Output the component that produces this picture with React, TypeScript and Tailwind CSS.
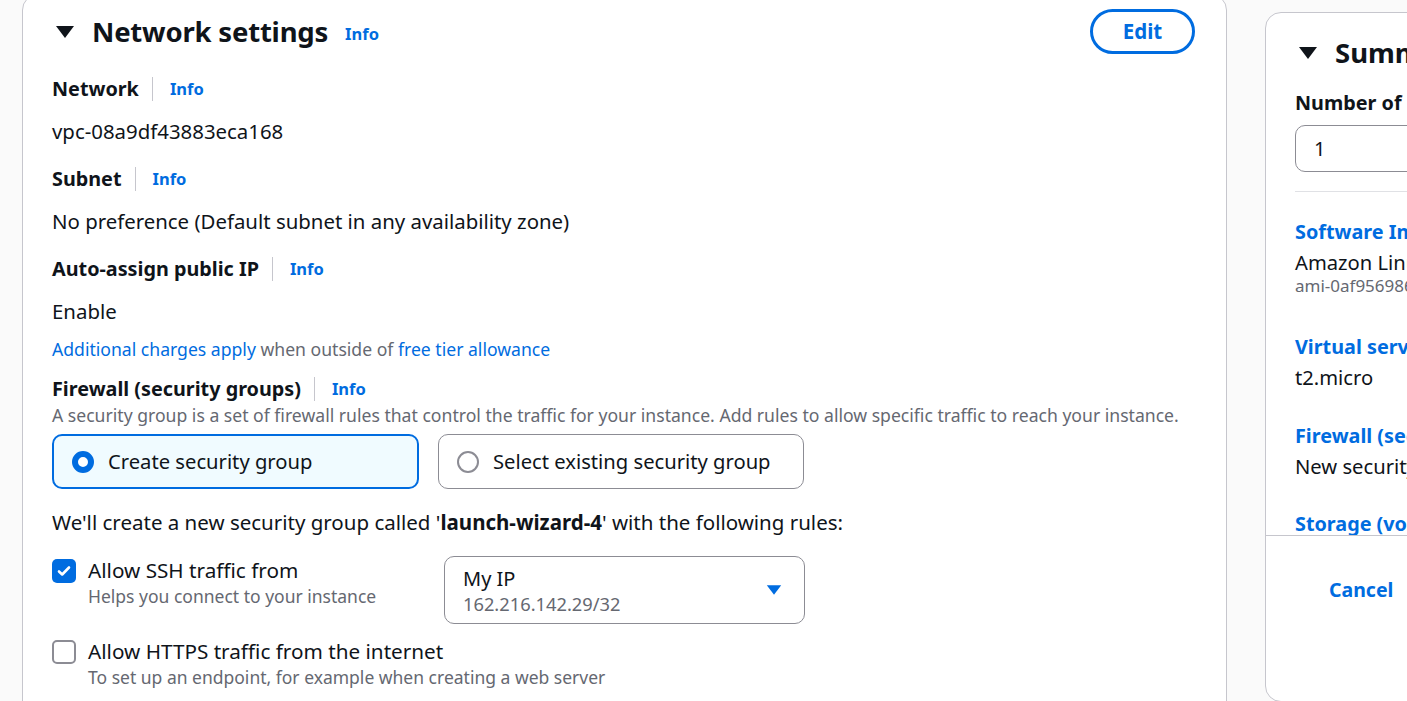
import React from 'react';

const font = { fontFamily: '"Noto Sans", "Open Sans", Arial, sans-serif' };

function Caret({ className }: { className?: string }) {
  return (
    <svg viewBox="0 0 20 14" className={className}>
      <path d="M1 1h18L10 13z" fill="currentColor" />
    </svg>
  );
}

function Label({ text }: { text: string }) {
  return (
    <div className="flex items-center h-[24px]">
      <span className="text-[19.8px] font-bold leading-[24px] text-[#0f141a]">{text}</span>
      <span className="ml-[13px] mr-[17px] h-[24px] w-px bg-[#c6c6cd]" />
      <span className="text-[16.5px] font-bold text-[#006ce0]">Info</span>
    </div>
  );
}

function Field({ label, value, className }: { label: string; value: string; className?: string }) {
  return (
    <div className={className}>
      <Label text={label} />
      <div className="mt-[17px] text-[20.4px] leading-[26px] text-[#0f141a]">{value}</div>
    </div>
  );
}

function Checkbox({ checked }: { checked?: boolean }) {
  if (checked) {
    return (
      <div className="w-[24px] h-[24px] rounded-[5px] bg-[#006ce0] flex items-center justify-center shrink-0">
        <svg viewBox="0 0 16 16" className="w-[16px] h-[16px]">
          <path d="M3 8.5l3.2 3L13 4.5" fill="none" stroke="white" strokeWidth="2.6" strokeLinecap="round" strokeLinejoin="round" />
        </svg>
      </div>
    );
  }
  return <div className="w-[24px] h-[24px] rounded-[5px] border-2 border-[#8c8c94] bg-white shrink-0" />;
}

export default function App() {
  return (
    <div className="w-[1407px] h-[701px] overflow-hidden bg-[#fafafa] text-[#0f141a]" style={font}>
      <div className="flex items-start">
        {/* Network settings card */}
        <div className="ml-[22px] mt-[-6px] w-[1205px] h-[740px] shrink-0 bg-white border border-[#c6c6cd] rounded-[16px] pl-[29px] pr-[30px] pt-[14px]">
          <div className="flex items-center justify-between h-[45px]">
            <div className="flex items-center">
              <Caret className="w-[20px] h-[14px] ml-[3px] text-[#0f141a]" />
              <h2 className="ml-[17px] text-[27.5px] font-bold leading-[36px] tracking-[-0.2px]">Network settings</h2>
              <span className="ml-[17px] mt-[6px] text-[16.5px] font-bold text-[#006ce0]">Info</span>
            </div>
            <button className="w-[105px] h-[45px] mr-[1px] rounded-full border-[3px] border-[#006ce0] text-[#006ce0] text-[20.5px] font-bold">
              Edit
            </button>
          </div>

          <Field className="mt-[23px]" label="Network" value="vpc-08a9df43883eca168" />
          <Field className="mt-[23px]" label="Subnet" value="No preference (Default subnet in any availability zone)" />
          <Field className="mt-[23px]" label="Auto-assign public IP" value="Enable" />

          <div className="mt-[14px] text-[17.6px] leading-[22px] text-[#656871]">
            <span className="text-[#006ce0]">Additional charges apply</span> when outside of{' '}
            <span className="text-[#006ce0]">free tier allowance</span>
          </div>

          <div className="mt-[17px]">
            <Label text="Firewall (security groups)" />
            <div className="mt-[3px] text-[17.6px] leading-[22px] text-[#656871] whitespace-nowrap">
              A security group is a set of firewall rules that control the traffic for your instance. Add rules to allow specific traffic to reach your instance.
            </div>
          </div>

          <div className="mt-[8px] flex gap-[19px]">
            <div className="w-[367px] h-[55px] rounded-[10px] border-2 border-[#006ce0] bg-[#f0fbff] flex items-center pl-[18px]">
              <div className="w-[22px] h-[22px] rounded-full border-[6px] border-[#006ce0] bg-white" />
              <span className="ml-[14px] text-[20.2px]">Create security group</span>
            </div>
            <div className="w-[366px] h-[55px] rounded-[10px] border border-[#8c8c94] flex items-center pl-[18px]">
              <div className="w-[22px] h-[22px] rounded-full border-2 border-[#8c8c94] bg-white" />
              <span className="ml-[14px] text-[20.2px]">Select existing security group</span>
            </div>
          </div>

          <div className="mt-[20px] text-[20.5px] leading-[26px] whitespace-nowrap">
            We'll create a new security group called '<span className="font-bold">launch-wizard-4</span>' with the following rules:
          </div>

          <div className="mt-[21px] flex items-start">
            <div className="w-[392px] flex items-start pt-[3px]">
              <Checkbox checked />
              <div className="ml-[12px] -mt-[2px]">
                <div className="text-[20.7px] leading-[26px]">Allow SSH traffic from</div>
                <div className="mt-[2px] text-[17.5px] leading-[22px] text-[#656871]">Helps you connect to your instance</div>
              </div>
            </div>
            <div className="w-[361px] h-[68px] rounded-[10px] border border-[#8c8c94] flex items-center justify-between pl-[18px] pr-[22px]">
              <div className="pt-[1px]">
                <div className="text-[20px] leading-[26px]">My IP</div>
                <div className="text-[18.3px] leading-[24px] text-[#656871]">162.216.142.29/32</div>
              </div>
              <Caret className="w-[16px] h-[12px] text-[#006ce0]" />
            </div>
          </div>

          <div className="mt-[15px] flex items-start pt-[1px]">
            <Checkbox />
            <div className="ml-[12px] -mt-[2px]">
              <div className="text-[20.7px] leading-[26px]">Allow HTTPS traffic from the internet</div>
              <div className="mt-[2px] text-[17.5px] leading-[22px] text-[#656871]">To set up an endpoint, for example when creating a web server</div>
            </div>
          </div>
        </div>

        {/* Summary card */}
        <div className="ml-[38px] mt-[12px] w-[340px] h-[690px] shrink-0 bg-white border border-[#c6c6cd] rounded-[16px] flex flex-col overflow-hidden">
          <div className="h-[522px] overflow-hidden pl-[29px] pt-[22px]">
            <div className="flex items-center h-[36px]">
              <Caret className="w-[20px] h-[14px] ml-[3px] text-[#0f141a]" />
              <h2 className="ml-[17px] text-[27.5px] font-bold leading-[36px] whitespace-nowrap">Summary</h2>
            </div>
            <div className="mt-[20px] text-[19.8px] font-bold leading-[24px] whitespace-nowrap">Number of instances</div>
            <div className="mt-[10px] h-[47px] rounded-[10px] border border-[#8c8c94] flex items-center pl-[18px] text-[20px]">1</div>
            <div className="mt-[19px] h-px bg-[#e0e1e5]" />
            <div className="mt-[27px] whitespace-nowrap">
              <div className="text-[19.8px] font-bold leading-[26px] text-[#006ce0]">Software Image (AMI)</div>
              <div className="mt-[4px] text-[20.2px] leading-[26px]">Amazon Linux 2023 AMI 2023.6...</div>
              <div className="text-[17px] leading-[22px] text-[#656871]">ami-0af9569868786b23a</div>
            </div>
            <div className="mt-[37px] whitespace-nowrap">
              <div className="text-[19.8px] font-bold leading-[26px] text-[#006ce0]">Virtual server type (instance type)</div>
              <div className="mt-[4px] text-[20.2px] leading-[26px]">t2.micro</div>
            </div>
            <div className="mt-[33px] whitespace-nowrap">
              <div className="text-[19.8px] font-bold leading-[26px] text-[#006ce0]">Firewall (security group)</div>
              <div className="mt-[4px] text-[20.2px] leading-[26px]">New security group</div>
            </div>
            <div className="mt-[32px] whitespace-nowrap">
              <div className="text-[19.8px] font-bold leading-[26px] text-[#006ce0]">Storage (volumes)</div>
              <div className="mt-[4px] text-[20.2px] leading-[26px]">1 volume(s) - 8 GiB</div>
            </div>
          </div>
          <div className="border-t border-[#c6c6cd] pl-[63px] pt-[39px]">
            <span className="text-[19.5px] font-bold text-[#006ce0]">Cancel</span>
          </div>
        </div>
      </div>
    </div>
  );
}
